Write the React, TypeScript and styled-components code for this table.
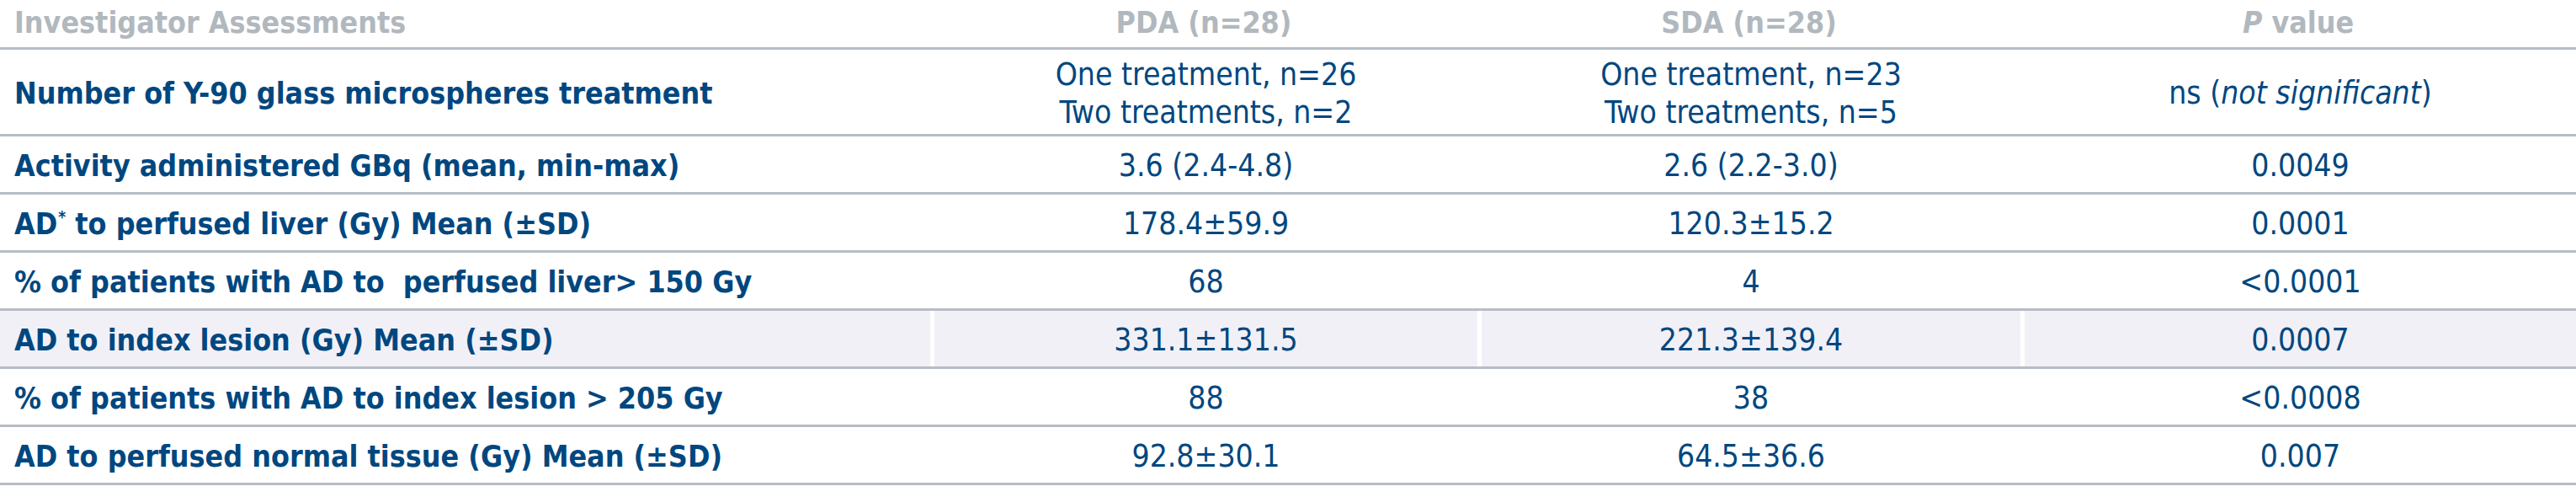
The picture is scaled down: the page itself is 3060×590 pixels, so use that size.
import * as React from 'react';
import styled, {createGlobalStyle} from 'styled-components';

const GlobalStyle = createGlobalStyle`
	html, body {
		margin: 0;
		padding: 0;
		background: #fff;
	}
	body {
		font-family: "DejaVu Sans Condensed", "DejaVu Sans", "Liberation Sans", sans-serif;
		font-stretch: condensed;
	}
`;

const NAVY = '#00477f';
const LINE = '#b6bdc4';

const Table = styled.div`
	width: 3060px;
	display: flex;
	flex-direction: column;
`;

const RowBase = styled.div`
	display: grid;
	grid-template-columns: 1105px 650px 645px 660px;
	border-bottom: 3px solid ${LINE};
`;

const HeadRow = styled(RowBase)`
	height: 56px;
`;

const BodyRow = styled(RowBase)<{$tall?: boolean; $shaded?: boolean}>`
	height: ${p => p.$tall ? 100 : 66}px;
	background: ${p => p.$shaded ? '#f2f0f7' : '#fff'};
`;

const HeadCell = styled.div<{$center?: boolean}>`
	display: flex;
	align-items: center;
	justify-content: ${p => p.$center ? 'center' : 'flex-start'};
	padding: 0 0 4px ${p => p.$center ? 0 : 17}px;
	color: #b1b8be;
	font-size: 35.5px;
	font-weight: 700;
	white-space: nowrap;
`;

const Label = styled.div`
	display: flex;
	align-items: center;
	padding: 3px 0 0 17px;
	color: ${NAVY};
	font-size: 35.5px;
	font-weight: 700;
	white-space: nowrap;
`;

const Value = styled.div`
	display: flex;
	align-items: center;
	justify-content: center;
	text-align: center;
	padding-top: 3px;
	border-left: 5px solid #fff;
	color: ${NAVY};
	font-size: 37px;
	font-weight: 400;
	line-height: 45px;
	white-space: nowrap;
`;

const Star = styled.span`
	font-size: 19px;
	line-height: 0;
	vertical-align: 14px;
	margin-left: 1px;
`;

type Row = {
	label: React.ReactNode;
	pda: React.ReactNode;
	sda: React.ReactNode;
	p: React.ReactNode;
	tall?: boolean;
	shaded?: boolean;
};

const rows: Row[] = [
	{
		label: 'Number of Y-90 glass microspheres treatment',
		pda: <>One treatment, n=26<br/>Two treatments, n=2</>,
		sda: <>One treatment, n=23<br/>Two treatments, n=5</>,
		p: <>ns (<i>not significant</i>)</>,
		tall: true,
	},
	{label: 'Activity administered GBq (mean, min-max)', pda: '3.6 (2.4-4.8)', sda: '2.6 (2.2-3.0)', p: '0.0049'},
	{label: <>AD<Star>*</Star> to perfused liver (Gy) Mean (±SD)</>, pda: '178.4±59.9', sda: '120.3±15.2', p: '0.0001'},
	{label: '% of patients with AD to\u00a0 perfused liver> 150 Gy', pda: '68', sda: '4', p: '<0.0001'},
	{label: 'AD to index lesion (Gy) Mean (±SD)', pda: '331.1±131.5', sda: '221.3±139.4', p: '0.0007', shaded: true},
	{label: '% of patients with AD to index lesion > 205 Gy', pda: '88', sda: '38', p: '<0.0008'},
	{label: 'AD to perfused normal tissue (Gy) Mean (±SD)', pda: '92.8±30.1', sda: '64.5±36.6', p: '0.007'},
];

export default function App() {
	return <>
		<GlobalStyle/>
		<Table>
			<HeadRow>
				<HeadCell><span>Investigator Assessments</span></HeadCell>
				<HeadCell $center><span>PDA (n=28)</span></HeadCell>
				<HeadCell $center><span>SDA (n=28)</span></HeadCell>
				<HeadCell $center><span><i>P</i> value</span></HeadCell>
			</HeadRow>
			{rows.map((r, i) => (
				<BodyRow key={i} $tall={r.tall} $shaded={r.shaded}>
					<Label><span>{r.label}</span></Label>
					<Value><span>{r.pda}</span></Value>
					<Value><span>{r.sda}</span></Value>
					<Value><span>{r.p}</span></Value>
				</BodyRow>
			))}
		</Table>
	</>;
}
